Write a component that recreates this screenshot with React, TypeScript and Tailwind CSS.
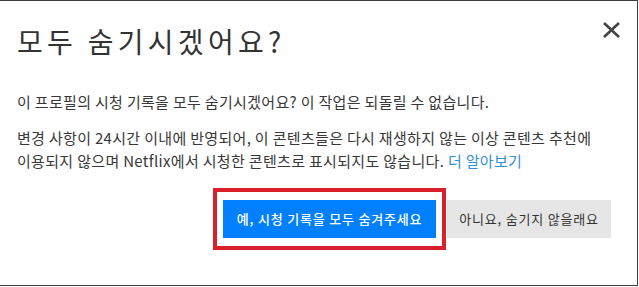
import React from "react";

export default function App() {
  return (
    <div
      className="w-[639px] h-[287px] bg-white overflow-hidden"
      style={{ fontFamily: '"Noto Sans CJK KR", "Noto Sans", sans-serif' }}
    >
      <div className="relative w-[638px] h-[286px] border-t border-r border-b border-[#3c3c3c] flex flex-col">
        <div className="flex items-start justify-between pl-[17px] pr-[15px] pt-[20px]">
          <h1 className="text-[28px] leading-[40px] text-[#333] font-normal tracking-[4.3px]">
            모두 숨기시겠어요?
          </h1>
          <button className="-mt-[1px] w-[22px] h-[20px] flex items-center justify-center">
            <svg width="19" height="16" viewBox="0 0 19 16">
              <path d="M2 1 L17 15 M17 1 L2 15" stroke="#444" strokeWidth="2.6" strokeLinecap="butt" />
            </svg>
          </button>
        </div>
        <div className="pl-[17px] pr-[10px] mt-[29px] text-[15px] leading-[23px] text-[#383838] tracking-[0.32px]">
          <p>이 프로필의 시청 기록을 모두 숨기시겠어요? 이 작업은 되돌릴 수 없습니다.</p>
          <p className="mt-[13px]">
            변경 사항이 24시간 이내에 반영되어, 이 콘텐츠들은 다시 재생하지 않는 이상 콘텐츠 추천에
            <br />
            이용되지 않으며 Netflix에서 시청한 콘텐츠로 표시되지도 않습니다.{" "}
            <a className="text-[#3191d6]">더 알아보기</a>
          </p>
        </div>
        <div className="flex items-center justify-end pr-[26px] mt-[16px]">
          <div className="border-[4px] border-[#d9202a] px-[6px] py-[8px]">
            <button className="h-[38px] w-[213px] bg-[#0080ff] text-white text-[13px] font-medium tracking-[0.8px]">
              예, 시청 기록을 모두 숨겨주세요
            </button>
          </div>
          <button className="ml-[1px] h-[38px] w-[164px] bg-[#e6e6e6] text-[#333] text-[13px] tracking-[0.8px]">
            아니요, 숨기지 않을래요
          </button>
        </div>
      </div>
    </div>
  );
}
